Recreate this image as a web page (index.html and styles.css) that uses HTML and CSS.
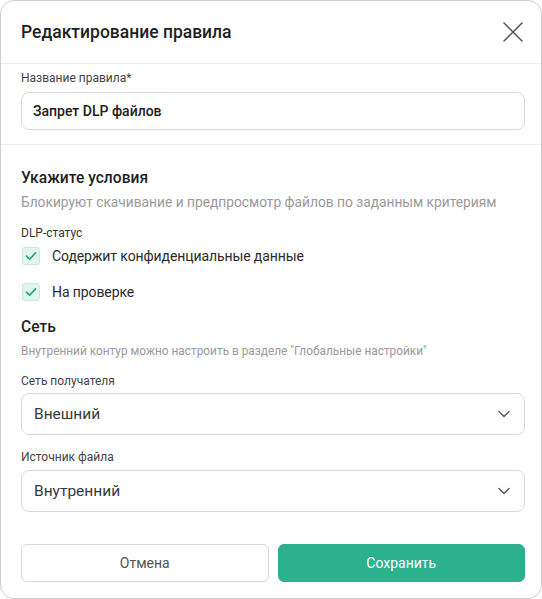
FILE: index.html
```html
<!DOCTYPE html>
<html lang="ru">
<head>
<meta charset="utf-8">
<title>Редактирование правила</title>
<link rel="stylesheet" href="styles.css">
</head>
<body>
<div class="dialog">
  <header class="dialog-header">
    <h1 class="dialog-title">Редактирование правила</h1>
    <button class="close-btn" aria-label="Закрыть">
      <svg width="20" height="20" viewBox="0 0 20 20"><path d="M1 1 L19 19 M19 1 L1 19" stroke="#555" stroke-width="1.5" fill="none" stroke-linecap="round"/></svg>
    </button>
  </header>

  <section class="section section-name">
    <label class="field-label">Название правила*</label>
    <div class="input">Запрет DLP файлов</div>
  </section>

  <section class="section section-conditions">
    <h2 class="section-title">Укажите условия</h2>
    <p class="section-sub">Блокируют скачивание и предпросмотр файлов по заданным критериям</p>

    <div class="field-label dlp-label">DLP-статус</div>
    <div class="check-row">
      <span class="checkbox"><svg width="14" height="14" viewBox="0 0 14 14"><path d="M2.5 7.2 L5.6 10.2 L11.6 3.9" stroke="#27a883" stroke-width="1.7" fill="none" stroke-linecap="round" stroke-linejoin="round"/></svg></span>
      <span class="check-text">Содержит конфиденциальные данные</span>
    </div>
    <div class="check-row check-row-2">
      <span class="checkbox"><svg width="14" height="14" viewBox="0 0 14 14"><path d="M2.5 7.2 L5.6 10.2 L11.6 3.9" stroke="#27a883" stroke-width="1.7" fill="none" stroke-linecap="round" stroke-linejoin="round"/></svg></span>
      <span class="check-text">На проверке</span>
    </div>

    <h2 class="section-title net-title">Сеть</h2>
    <p class="hint">Внутренний контур можно настроить в разделе "Глобальные настройки"</p>

    <div class="field-label net-label">Сеть получателя</div>
    <div class="select">
      <span class="select-value">Внешний</span>
      <svg class="chevron" width="12" height="8" viewBox="0 0 12 8"><path d="M1 1.5 L6 6.5 L11 1.5" stroke="#555" stroke-width="1.3" fill="none" stroke-linecap="round" stroke-linejoin="round"/></svg>
    </div>

    <div class="field-label net-label net-label-2">Источник файла</div>
    <div class="select">
      <span class="select-value">Внутренний</span>
      <svg class="chevron" width="12" height="8" viewBox="0 0 12 8"><path d="M1 1.5 L6 6.5 L11 1.5" stroke="#555" stroke-width="1.3" fill="none" stroke-linecap="round" stroke-linejoin="round"/></svg>
    </div>

    <div class="actions">
      <button class="btn btn-cancel">Отмена</button>
      <button class="btn btn-save">Сохранить</button>
    </div>
  </section>
</div>
</body>
</html>
```

FILE: styles.css
```css
* { box-sizing: border-box; }
html, body { margin: 0; padding: 0; background: #fff; }
body { font-family: Roboto, "Noto Sans", Arial, sans-serif; color: #222; }

.dialog {
  width: 542px;
  height: 599px;
  border: 1px solid #cfcfcf;
  border-radius: 14px;
  background: #fff;
  overflow: hidden;
  display: flex;
  flex-direction: column;
}

.dialog-header {
  height: 63px;
  border-bottom: 1px solid #ececec;
  display: flex;
  align-items: center;
  justify-content: space-between;
  padding: 0 18px 0 20px;
}
.dialog-title {
  margin: 0;
  font-size: 17.5px;
  font-weight: 500;
  color: #1f1f1f;
  line-height: 24px;
}
.close-btn {
  border: 0;
  background: none;
  padding: 0;
  width: 20px;
  height: 20px;
  display: flex;
  cursor: pointer;
}

.section { padding: 0 16px 0 20px; }
.section-name {
  padding-top: 6px;
  padding-bottom: 14px;
  border-bottom: 1px solid #ececec;
}

.field-label {
  display: block;
  font-size: 12px;
  line-height: 16px;
  color: #444;
  margin-bottom: 6px;
}

.input {
  height: 38px;
  border: 1px solid #d9d9d9;
  border-radius: 8px;
  padding: 0 11px;
  display: flex;
  align-items: center;
  font-size: 14px;
  font-weight: 500;
  color: #222;
}

.section-conditions {
  padding-top: 22px;
  padding-bottom: 16px;
  flex: 1;
  display: flex;
  flex-direction: column;
}
.section-title {
  margin: 0;
  font-size: 15.6px;
  font-weight: 500;
  line-height: 22px;
  color: #1f1f1f;
}
.section-sub {
  margin: 3px 0 0;
  font-size: 13.75px;
  line-height: 20px;
  color: #9a9a9a;
}
.dlp-label { margin: 13px 0 3px; color: #333; }

.check-row {
  display: flex;
  align-items: center;
  height: 24px;
}
.check-row-2 { margin-top: 12px; }
.checkbox {
  width: 18px;
  height: 18px;
  border-radius: 3px;
  background: #e1f4ed;
  border: 1px solid #cbe8dd;
  display: flex;
  align-items: center;
  justify-content: center;
  margin-left: 1px;
}
.check-text {
  margin-left: 12px;
  font-size: 14px;
  letter-spacing: -0.1px;
  color: #2b2b2b;
}

.net-title { margin-top: 12px; }
.hint {
  margin: 5px 0 0;
  font-size: 11.85px;
  line-height: 16px;
  color: #9a9a9a;
}
.net-label { margin: 14px 0 4px; }
.net-label-2 { margin-bottom: 5px; }

.select {
  height: 42px;
  border: 1px solid #d9d9d9;
  border-radius: 8px;
  padding: 0 14px 0 12px;
  display: flex;
  align-items: center;
  justify-content: space-between;
}
.select-value { font-size: 15.5px; color: #3a3a3a; }
.chevron { display: block; }

.actions {
  margin-top: auto;
  display: flex;
  gap: 9px;
}
.btn {
  flex: 1;
  height: 38px;
  border-radius: 6px;
  font-family: inherit;
  font-size: 14px;
  font-weight: 400;
  cursor: pointer;
}
.btn-cancel {
  background: #fff;
  border: 1px solid #d9d9d9;
  color: #555;
}
.btn-save {
  background: #2cb18f;
  border: 1px solid #2cb18f;
  color: #fff;
}
```
